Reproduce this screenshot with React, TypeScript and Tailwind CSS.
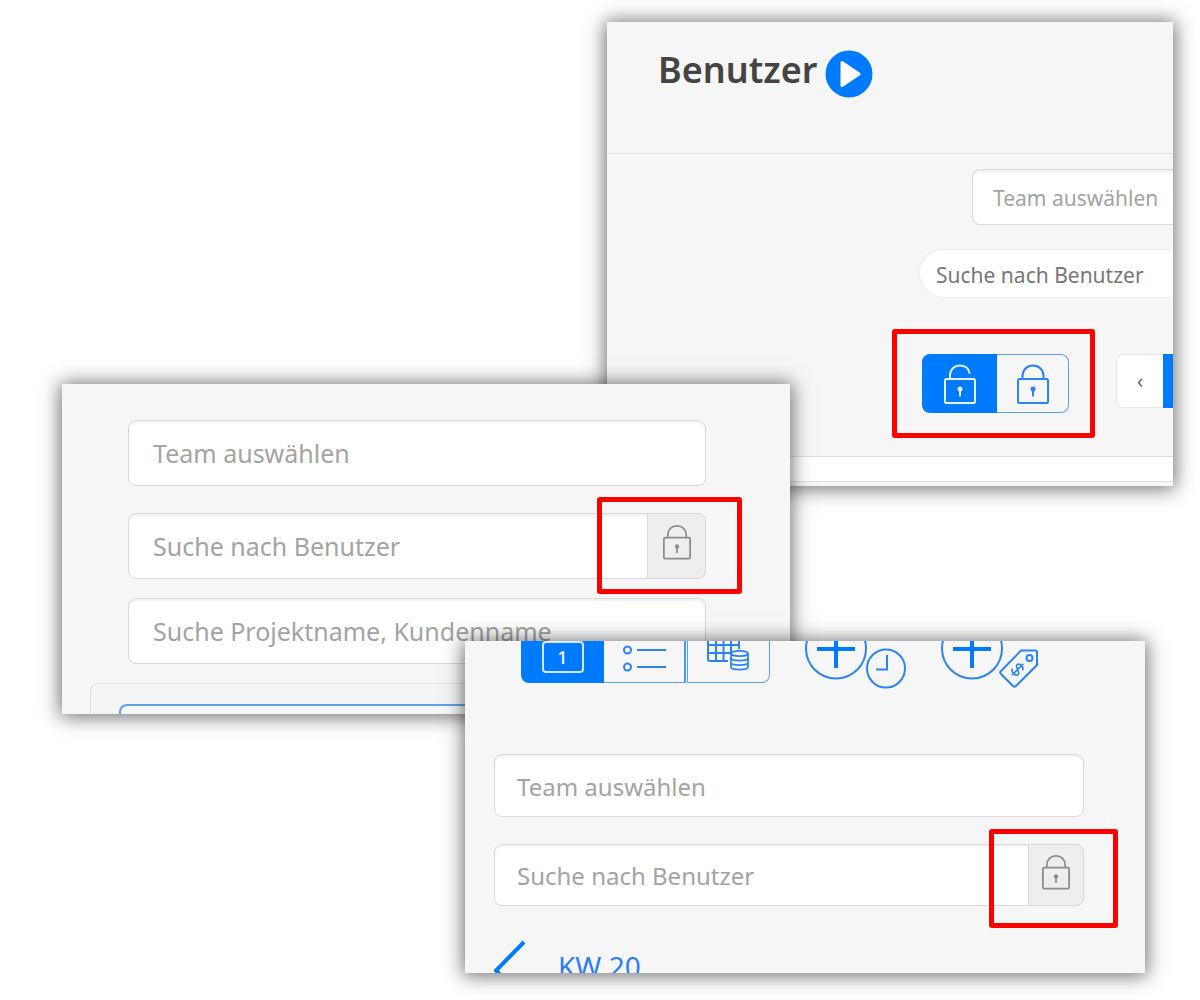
import type { ReactNode } from "react";
import clsx from "clsx";

type LockIconProps = {
  open?: boolean;
  className?: string;
};

function LockIcon({ open = false, className }: LockIconProps) {
  return (
    <svg
      viewBox="0 0 32 40"
      fill="none"
      stroke="currentColor"
      strokeWidth="2"
      className={className}
      aria-hidden="true"
    >
      <rect x="1" y="15" width="30" height="24" rx="1.5" />
      {open ? (
        <path d="M6 15V11.5C6 5.5 10.500 1.500 16 1.500C21 1.500 25 4.500 25.500 9" strokeLinecap="round" />
      ) : (
        <path d="M5.500 15V12C5.500 6 10 1.500 16 1.500S26.500 6 26.500 12V15" />
      )}
      <circle cx="16" cy="25" r="2.500" fill="currentColor" stroke="none" />
      <path d="M16 25V32.500" />
    </svg>
  );
}

function Panel({ className, children }: { className: string; children: ReactNode }) {
  return (
    <section
      className={clsx(
        "relative isolate overflow-hidden bg-[#f6f6f6] shadow-[0_1px_18px_2px_rgba(0,0,0,0.56)]",
        className
      )}
    >
      {children}
    </section>
  );
}

function Highlight({ className }: { className: string }) {
  return (
    <div
      className={clsx(
        "pointer-events-none absolute z-10 rounded-[3px] border-5 border-[#fe0000]",
        className
      )}
    />
  );
}

type FieldProps = {
  label: string;
  className: string;
  children?: ReactNode;
};

function Field({ label, className, children }: FieldProps) {
  return (
    <div
      className={clsx(
        "flex rounded-lg border border-[#d9d9d9] bg-white shadow-[inset_0_2px_2px_rgba(0,0,0,0.06)]",
        className
      )}
    >
      <input
        type="text"
        aria-label={label}
        placeholder={label}
        className="min-w-0 flex-1 bg-transparent pt-0.5 outline-none placeholder:text-[#a3a3a3]"
      />
      {children}
    </div>
  );
}

function UserPanel() {
  return (
    <Panel className="mr-[27px] ml-[607px]">
      <header className="flex h-[132px] items-start gap-2 border-b border-[#e2e2e2] pt-7 pl-[51px]">
        <h1 className="text-[36px] leading-10 font-semibold text-[#444]">Benutzer</h1>
        <button type="button" aria-label="Start">
          <svg viewBox="0 0 48 48" className="size-12">
            <circle cx="24" cy="24" r="23.500" fill="#007aff" />
            <path
              d="M17 12.500V35.500L34 24Z"
              fill="#fff"
              stroke="#fff"
              strokeWidth="3"
              strokeLinejoin="round"
            />
          </svg>
        </button>
      </header>

      <div className="pt-[15px] pb-[43px]">
        <Field
          label="Team auswählen"
          className="ml-[365px] h-14 rounded-r-none border-r-0 pt-0.5 pl-5 text-[21px]"
        />
        <input
          type="search"
          aria-label="Suche nach Benutzer"
          placeholder="Suche nach Benutzer"
          className="mt-6 ml-[312px] block h-[49px] w-[calc(100%-312px)] rounded-l-full border border-r-0 border-[#ececec] bg-white pt-0.5 pl-4 text-[21px] outline-none placeholder:text-[#777]"
        />

        <div className="mt-14 ml-[315px] flex items-start justify-between">
          <div className="relative flex h-[59px] w-[147px]">
            <button
              type="button"
              aria-label="Entsperrte Benutzer"
              className="flex w-[75px] items-center justify-center rounded-l-lg bg-[#007aff] text-[#e6f2ff]"
            >
              <LockIcon open className="h-10 w-8" />
            </button>
            <button
              type="button"
              aria-label="Gesperrte Benutzer"
              className="flex flex-1 items-center justify-center rounded-r-lg border border-l-0 border-[#5a9ff7] text-[#2b84f5]"
            >
              <LockIcon className="h-10 w-8" />
            </button>
            <Highlight className="-top-[25px] -right-[26px] -bottom-[25px] -left-[30px]" />
          </div>
          <div className="flex h-[54px]">
            <button
              type="button"
              className="w-[47px] rounded-l-md border border-r-0 border-[#e8e8e8] bg-white text-xl text-[#666]"
            >
              ‹
            </button>
            <button type="button" aria-label="Seite 1" className="w-[10px] bg-[#007aff]" />
          </div>
        </div>
      </div>

      <div className="mb-1 h-[26px] border-y border-[#dfdfdf] bg-white" />
    </Panel>
  );
}

function ProjectPanel() {
  return (
    <Panel className="-mt-[102px] mr-[410px] ml-[62px] pt-9">
      <div className="mr-[84px] ml-[66px] text-[25px]">
        <Field label="Team auswählen" className="h-[66px] pl-6" />
        <Field label="Suche nach Benutzer" className="mt-[27px] h-[66px] pl-6">
          <div className="relative -my-px -mr-px flex w-[59px]">
            <button
              type="button"
              aria-label="Gesperrte Benutzer"
              className="flex flex-1 items-start justify-center rounded-r-lg border border-[#d9d9d9] bg-[#eee] pt-[10px] text-[#8c8c8c]"
            >
              <LockIcon className="h-9 w-7" />
            </button>
            <Highlight className="-top-4 -right-9 -bottom-[15px] -left-[50px]" />
          </div>
        </Field>
        <Field label="Suche Projektname, Kundenname" className="mt-[19px] h-[66px] pl-6" />
      </div>
      <div className="mt-[19px] mr-8 ml-7 rounded-t-lg border border-b-0 border-[#e2e2e2] bg-[#f4f4f4] pt-5 pl-7">
        <div className="h-[10px] rounded-tl-lg border-t-2 border-l-2 border-[#62a1e8] bg-[#f6f6f6]" />
      </div>
    </Panel>
  );
}

function ViewSwitch() {
  return (
    <div className="flex h-[42px] w-[249px] text-[#2b84f5]">
      <button type="button" aria-label="Tag" className="w-[83px] rounded-bl-lg bg-[#007aff]">
        <span className="mx-auto flex h-8 w-[42px] -translate-y-[5px] items-center justify-center rounded-sm border-2 border-[#d3e8ff] text-lg font-medium text-white">
          1
        </span>
      </button>
      <button
        type="button"
        aria-label="Liste"
        className="flex w-[82px] justify-center border-r-2 border-b border-[#5a9ff7] border-r-[#4b95f6]"
      >
        <svg viewBox="0 0 44 40" fill="none" stroke="currentColor" strokeWidth="2" className="h-10 w-11">
          <circle cx="5.500" cy="9" r="3.500" />
          <circle cx="5.500" cy="26" r="3.500" />
          <path d="M15 9H44M15 26H44" />
        </svg>
      </button>
      <button
        type="button"
        aria-label="Tabelle"
        className="ml-px flex flex-1 justify-center rounded-br-lg border-r border-b border-l border-[#5a9ff7]"
      >
        <svg viewBox="0 0 44 40" fill="none" stroke="currentColor" strokeWidth="2" className="h-10 w-11">
          <path d="M1 0V18Q1 20 3 20H21M9 0V20M16.500 0V20M24 0V12M32 0V8M1 4H33M1 12H24" />
          <g fill="#f6f6f6" strokeWidth="1.800">
            <path d="M24 12.500V26C24 29.500 41 29.500 41 26V12.500" />
            <path d="M24 17C24 20.500 41 20.500 41 17M24 21.500C24 25 41 25 41 21.500" />
            <ellipse cx="32.500" cy="12.500" rx="8.500" ry="2.600" />
          </g>
        </svg>
      </button>
    </div>
  );
}

function CalendarPanel() {
  return (
    <Panel className="-mt-[73px] mr-[55px] ml-[465px]">
      <div className="flex items-start pl-14">
        <ViewSwitch />
        <button type="button" aria-label="Zeit erfassen" className="ml-[34px] text-[#2b84f5]">
          <svg viewBox="0 0 104 50" fill="none" stroke="currentColor" strokeWidth="2" className="h-[50px] w-[104px]">
            <circle cx="32" cy="7.500" r="30" />
            <path d="M13 8H51M32 0V27" stroke="#007aff" strokeWidth="4" />
            <circle cx="82" cy="27.500" r="19" />
            <path d="M83 14V28.500H72" />
          </svg>
        </button>
        <button type="button" aria-label="Kosten erfassen" className="ml-8 text-[#2b84f5]">
          <svg viewBox="0 0 104 50" fill="none" stroke="currentColor" strokeWidth="2" className="h-[50px] w-[104px]">
            <circle cx="32" cy="7.500" r="30" />
            <path d="M13 8H51M32 0V27" stroke="#007aff" strokeWidth="4" />
            <path
              d="M81 9.500H95Q97 9.500 97 11.500V24L76 45Q74.500 46.500 73 45L61 33Q59.500 31.500 61 30Z"
              strokeLinejoin="round"
            />
            <circle cx="89.500" cy="17" r="3" />
            <g strokeWidth="1.600" transform="rotate(45 77.500 28.500)">
              <path d="M81.500 25.500C81 22 74 22 73.800 25.500C73.800 29 81.500 28 81.500 31.500C81.500 35 74 35 73.500 31.500M77.600 20.500V36.500" />
            </g>
          </svg>
        </button>
      </div>

      <div className="mt-[63px] mr-[61px] ml-[29px] text-[24px]">
        <Field label="Team auswählen" className="h-[63px] pl-[22px]" />
        <Field label="Suche nach Benutzer" className="mt-[27px] h-[62px] pl-[22px]">
          <div className="relative -my-px -mr-px flex w-14">
            <button
              type="button"
              aria-label="Gesperrte Benutzer"
              className="flex flex-1 items-start justify-center rounded-r-lg border border-[#d9d9d9] bg-[#eee] pt-[9px] text-[#8c8c8c]"
            >
              <LockIcon className="h-9 w-7" />
            </button>
            <Highlight className="-top-[15px] -right-[34px] -bottom-[22px] -left-[39px]" />
          </div>
        </Field>
      </div>

      <div className="mt-[34px] ml-[29px] flex h-[33px] items-start gap-8">
        <button type="button" aria-label="Vorherige Woche" className="text-[#007aff]">
          <svg viewBox="0 0 32 60" fill="none" stroke="currentColor" strokeWidth="4" className="h-[60px] w-8">
            <path d="M30 2L2 30.500L30 58" />
          </svg>
        </button>
        <span className="pt-2 text-[28px] leading-9 text-[#2b7df8]">KW 20</span>
      </div>
    </Panel>
  );
}

export default function App() {
  return (
    <main className="min-h-screen overflow-x-hidden bg-white pt-[22px] pb-[27px] font-['Noto_Sans','Open_Sans',sans-serif]">
      <UserPanel />
      <ProjectPanel />
      <CalendarPanel />
    </main>
  );
}
